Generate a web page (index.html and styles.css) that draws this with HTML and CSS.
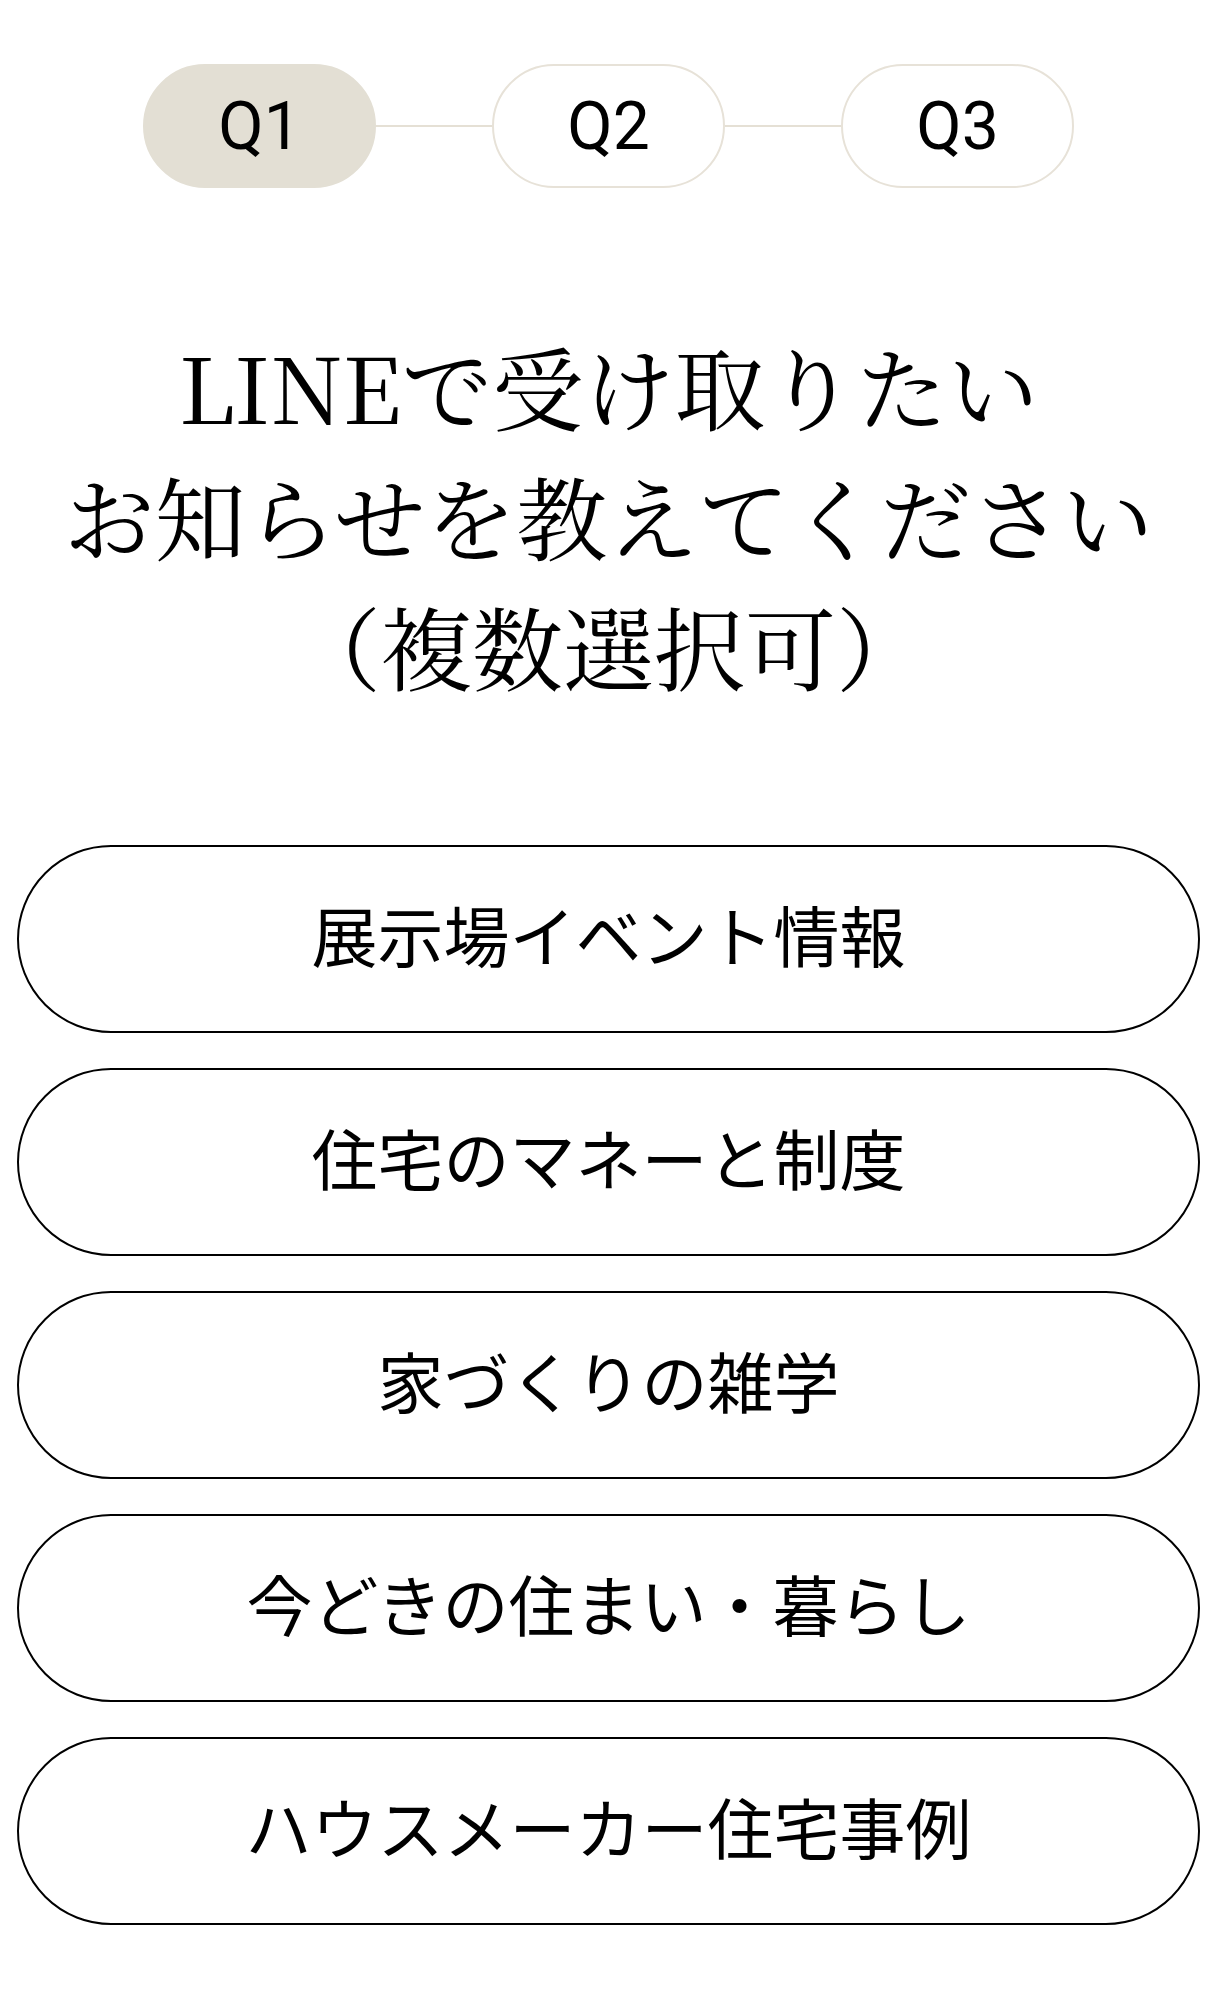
FILE: index.html
```html
<!DOCTYPE html>
<html lang="ja">
<head>
<meta charset="utf-8">
<title>LINE通知設定</title>
<link rel="stylesheet" href="styles.css">
</head>
<body>
<main class="survey">
  <ol class="steps">
    <li class="step step--current">Q1</li>
    <li class="step-line" aria-hidden="true"></li>
    <li class="step">Q2</li>
    <li class="step-line" aria-hidden="true"></li>
    <li class="step">Q3</li>
  </ol>

  <h1 class="question">LINEで受け取りたい<br>お知らせを教えてください<br>（複数選択可）</h1>

  <div class="choices">
    <button class="choice" type="button">展示場イベント情報</button>
    <button class="choice" type="button">住宅のマネーと制度</button>
    <button class="choice" type="button">家づくりの雑学</button>
    <button class="choice" type="button">今どきの住まい・暮らし</button>
    <button class="choice" type="button">ハウスメーカー住宅事例</button>
  </div>
</main>
</body>
</html>
```

FILE: styles.css
```css
html, body {
  margin: 0;
  padding: 0;
  background: #fff;
  color: #000;
}

.survey {
  padding: 64px 17px 60px;
  font-family: "Noto Sans CJK JP", "Noto Sans", sans-serif;
}

/* progress indicator */
.steps {
  list-style: none;
  margin: 0;
  padding: 0;
  display: flex;
  justify-content: center;
  align-items: center;
}

.step {
  box-sizing: border-box;
  width: 233px;
  height: 124px;
  border: 2px solid #e7e2d8;
  border-radius: 62px;
  display: flex;
  align-items: center;
  justify-content: center;
  font-family: Roboto, "Noto Sans", sans-serif;
  font-size: 66px;
  color: #000;
  background: #fff;
}

.step--current {
  background: #e3dfd4;
  border-color: #e3dfd4;
}

.step-line {
  width: 116px;
  height: 2px;
  background: #e5e0d5;
}

/* question heading */
.question {
  margin: 132px 0 0;
  text-align: center;
  font-family: "Noto Serif CJK JP", "Source Han Serif JP", "IPAMincho", "Liberation Serif", serif;
  font-weight: 400;
  font-size: 91px;
  line-height: 130px;
  letter-spacing: 0;
}

/* answer options */
.choices {
  margin-top: 135px;
  display: flex;
  flex-direction: column;
  gap: 35px;
}

.choice {
  box-sizing: border-box;
  height: 188px;
  width: 100%;
  border: 2px solid #000;
  border-radius: 94px;
  background: #fff;
  color: #000;
  font-family: "Noto Sans CJK JP", "Noto Sans", sans-serif;
  font-size: 66px;
  font-weight: 400;
  padding: 0 0 12px;
  cursor: pointer;
}
```
